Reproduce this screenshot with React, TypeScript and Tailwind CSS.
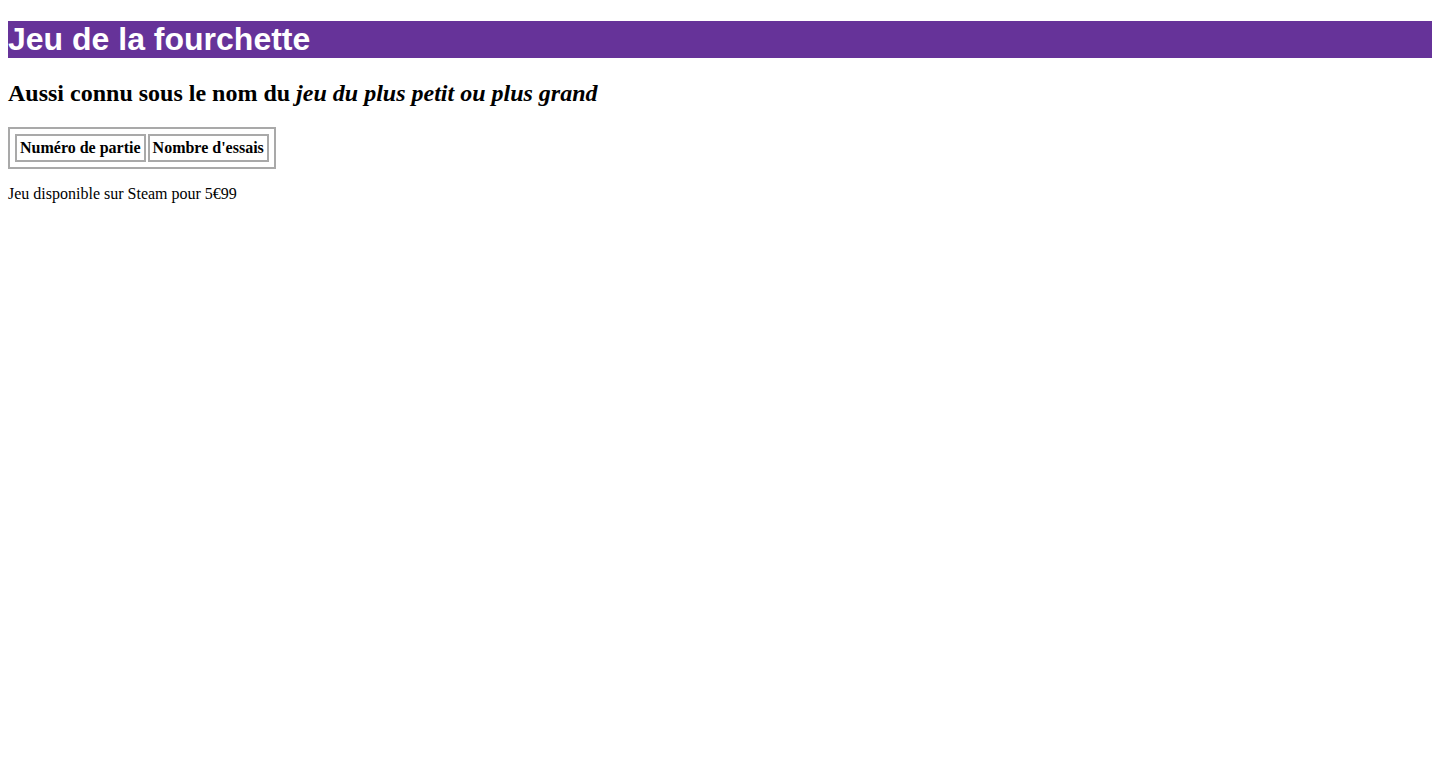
export default function App() {
  return (
    <div className="m-2 font-['Liberation_Serif',serif] text-black leading-[normal] text-[16px]">
      <h1 className="mt-[21.44px] mb-[21.44px] bg-[#663399] text-white font-['Liberation_Sans',sans-serif] text-[32px] font-bold leading-[normal]">
        Jeu de la fourchette
      </h1>
      <h2 className="mt-[19.92px] mb-[19.92px] text-[24px] font-bold leading-[normal]">
        Aussi connu sous le nom du <em className="italic">jeu du plus petit ou plus grand</em>
      </h2>
      <table className="border-2 border-[#a9a9a9] border-separate border-spacing-[2px] p-[3px]">
        <thead>
          <tr>
            <th className="border-2 border-[#a9a9a9] px-[3px] py-[3px] font-bold text-center leading-[normal]">Numéro de partie</th>
            <th className="border-2 border-[#a9a9a9] px-[3px] py-[3px] font-bold text-center leading-[normal]">Nombre d'essais</th>
          </tr>
        </thead>
      </table>
      <p className="my-4 leading-[normal]">Jeu disponible sur Steam pour 5€99</p>
    </div>
  );
}
